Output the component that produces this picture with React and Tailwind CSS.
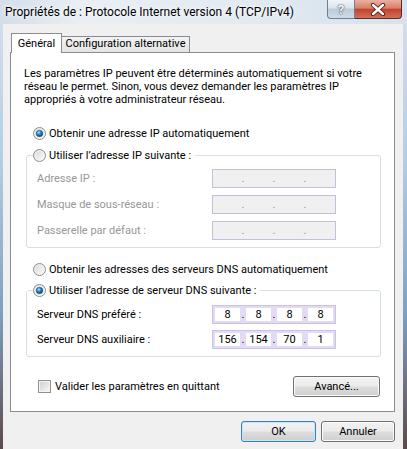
import { Fragment, useId } from 'react';

function Radio({ checked = false }) {
  const id = useId().replace(/:/g, '');
  return (
    <svg width="13" height="13" viewBox="0 0 13 13" className="shrink-0">
      <defs>
        <linearGradient id={`rb${id}`} x1="0" y1="0" x2="1" y2="1">
          <stop offset="0" stopColor="#d6d6d6" />
          <stop offset="1" stopColor="#fdfdfd" />
        </linearGradient>
        <radialGradient id={`rd${id}`} cx="0.4" cy="0.35" r="0.65">
          <stop offset="0" stopColor="#b6e6fb" />
          <stop offset="0.45" stopColor="#2a8ccc" />
          <stop offset="1" stopColor="#0c3a6c" />
        </radialGradient>
      </defs>
      <circle cx="6.5" cy="6.5" r="6" fill={`url(#rb${id})`} stroke="#8d8d8d" />
      <circle cx="6.5" cy="6.5" r="4.6" fill="none" stroke="#f4f4f4" strokeWidth="0.8" />
      {checked && <circle cx="6.5" cy="6.5" r="3.3" fill={`url(#rd${id})`} stroke="#1b4f80" strokeWidth="0.5" />}
    </svg>
  );
}

function Checkbox() {
  return (
    <div className="w-[13px] h-[13px] shrink-0 border border-[#8e8f8f] bg-[linear-gradient(135deg,#cfcfcf,#f7f7f7)] shadow-[inset_0_0_0_1px_#f4f4f4]" />
  );
}

function IpField({ values = ['', '', '', ''], disabled = false }) {
  return (
    <div
      className={
        disabled
          ? 'flex h-[19px] w-[124px] border border-[#c6bde0] bg-[#f0f0f0] p-[2px]'
          : 'flex h-[19px] w-[124px] border border-[#cbc1e6] bg-[#e3daf4] p-[2px]'
      }
    >
      {values.map((v, i) => (
        <Fragment key={i}>
          {i > 0 && (
            <span
              className={
                disabled
                  ? 'w-[6px] text-center leading-[14px] text-[#8c8c8c]'
                  : 'w-[6px] text-center leading-[14px] text-black'
              }
            >
              .
            </span>
          )}
          <span className={disabled ? 'flex-1 text-center leading-[14px]' : 'flex-1 bg-white text-center leading-[14px]'}>
            {v}
          </span>
        </Fragment>
      ))}
    </div>
  );
}

function WinButton({ children, isDefault = false, className = '' }) {
  return (
    <button
      className={
        'h-[21px] rounded-[3px] border bg-[linear-gradient(to_bottom,#f2f2f2_0%,#ebebeb_48%,#dddddd_52%,#cfcfcf_100%)] text-[11px] leading-[17px] text-black ' +
        (isDefault
          ? 'border-[#3c7fb1] shadow-[inset_0_0_0_1px_#c5e7f9] '
          : 'border-[#707070] shadow-[inset_0_0_0_1px_#fbfbfb] ') +
        className
      }
    >
      {children}
    </button>
  );
}

function FieldRow({ label, values, disabled }) {
  return (
    <div className="flex items-center h-[19px] pl-[10px]">
      <span className={disabled ? 'w-[175px] text-[#979797]' : 'w-[175px] text-black'}>{label}</span>
      <IpField values={values} disabled={disabled} />
    </div>
  );
}

export default function App() {
  return (
    <div className="w-[407px] h-[449px] overflow-hidden flex flex-col bg-[linear-gradient(to_bottom,#d4e1ee_0%,#b7cde2_35%,#7f9fc0_70%,#5c4a4a_100%)] font-['Roboto','Noto_Sans',sans-serif] text-[11px] leading-[15px] text-black">
      {/* title bar */}
      <div className="h-[24px] shrink-0 flex items-start bg-[linear-gradient(to_right,#d3dee9_0%,#e9eff5_20%,#e2eaf2_60%,#d6e2ed_100%)]">
        <span className="pl-[5px] pt-[4px] text-[12px] leading-[16px] whitespace-nowrap [text-shadow:0_0_8px_#fff,0_0_4px_#fff]">
          Propriétés de : Protocole Internet version 4 (TCP/IPv4)
        </span>
        <div className="ml-auto mr-[5px] flex">
          <div className="w-[28px] h-[19px] rounded-bl-[4px] border border-t-0 border-[#6d7f93] bg-[linear-gradient(to_bottom,#f1f5f9_0%,#d9e3ec_45%,#bccbd9_50%,#cfdbe6_100%)] flex items-center justify-center text-[13px] font-bold text-[#f5f7fa] [text-shadow:0_0_1px_#3c4a5a,0_0_2px_#3c4a5a]">
            ?
          </div>
          <div className="w-[47px] h-[19px] rounded-br-[4px] border border-t-0 border-l-0 border-[#5e2a22] bg-[linear-gradient(to_bottom,#eab0a1_0%,#d98069_45%,#c1432c_52%,#d2705a_100%)] flex items-center justify-center">
            <svg width="16" height="13" viewBox="0 0 16 13">
              <path d="M3 2 L13 11 M13 2 L3 11" stroke="#4a1d17" strokeWidth="4.2" strokeLinecap="round" />
              <path d="M3 2 L13 11 M13 2 L3 11" stroke="#ffffff" strokeWidth="2.4" strokeLinecap="round" />
            </svg>
          </div>
        </div>
      </div>

      {/* client area */}
      <div className="ml-[3px] mr-[4px] flex-1 bg-[#f0f0f0] flex flex-col">
        {/* tabs */}
        <div className="mt-[9px] ml-[8px] h-[19px] flex items-end">
          <div className="relative z-10 -mb-px h-[20px] w-[51px] border border-b-0 border-[#898c95] bg-white flex justify-center pt-[2px]">
            Général
          </div>
          <div className="h-[16px] w-[128px] border border-b-0 border-l-0 border-[#898c95] bg-[linear-gradient(to_bottom,#f3f3f3,#e4e4e4)] flex justify-center leading-[14px] whitespace-nowrap">
            Configuration alternative
          </div>
        </div>

        {/* tab panel */}
        <div className="ml-[7px] w-[385px] h-[360px] border border-[#898c95] bg-white flex flex-col">
          <p className="mt-[14px] pl-[13px] leading-[13px] whitespace-nowrap">
            Les paramètres IP peuvent être déterminés automatiquement si votre
            <br />
            réseau le permet. Sinon, vous devez demander les paramètres IP
            <br />
            appropriés à votre administrateur réseau.
          </p>

          <div className="mt-[20px] ml-[22px] flex items-center gap-[3px] h-[15px]">
            <Radio checked />
            <span>Obtenir une adresse IP automatiquement</span>
          </div>

          <div className="relative mt-[14px] ml-[15px] w-[355px] h-[93px] border border-[#d5dfe5] rounded-[3px] flex flex-col gap-[7px] pt-[13px]">
            <div className="absolute -top-[8px] left-[6px] flex items-center gap-[3px] bg-white pr-[4px] h-[15px]">
              <Radio />
              <span>Utiliser l’adresse IP suivante :</span>
            </div>
            <FieldRow label="Adresse IP :" disabled />
            <FieldRow label="Masque de sous-réseau :" disabled />
            <FieldRow label="Passerelle par défaut :" disabled />
          </div>

          <div className="mt-[14px] ml-[22px] flex items-center gap-[3px] h-[15px]">
            <Radio />
            <span>Obtenir les adresses des serveurs DNS automatiquement</span>
          </div>

          <div className="relative mt-[13px] ml-[15px] w-[355px] h-[67px] border border-[#d5dfe5] rounded-[3px] flex flex-col gap-[6px] pt-[14px]">
            <div className="absolute -top-[8px] left-[6px] flex items-center gap-[3px] bg-white pr-[4px] h-[15px]">
              <Radio checked />
              <span>Utiliser l’adresse de serveur DNS suivante :</span>
            </div>
            <FieldRow label="Serveur DNS préféré :" values={['8', '8', '8', '8']} />
            <FieldRow label="Serveur DNS auxiliaire :" values={['156', '154', '70', '1']} />
          </div>

          <div className="mt-[19px] flex items-center h-[20px]">
            <div className="ml-[27px] flex items-center gap-[4px]">
              <Checkbox />
              <span>Valider les paramètres en quittant</span>
            </div>
            <WinButton className="ml-auto mr-[14px] w-[87px] h-[20px]">Avancé...</WinButton>
          </div>
        </div>

        {/* dialog buttons */}
        <div className="mt-[9px] mr-[8px] flex justify-end gap-[5px]">
          <WinButton isDefault className="w-[75px]">OK</WinButton>
          <WinButton className="w-[74px]">Annuler</WinButton>
        </div>
      </div>
    </div>
  );
}
